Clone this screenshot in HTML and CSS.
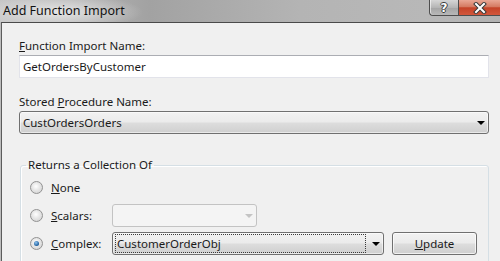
FILE: index.html
```html
<!DOCTYPE html>
<html lang="en">
<head>
<meta charset="UTF-8" />
<title>Add Function Import</title>
<link rel="stylesheet" href="styles.css">
</head>
<body>

<div class="window">
  <div class="titlebar">
    <span class="title">Add Function Import</span>
    <div class="caption-btns">
      <div class="cap-btn help"><span>?</span></div>
      <div class="cap-btn close">
        <svg width="16" height="12" viewBox="0 0 16 12">
          <path d="M4 2 L12 10 M12 2 L4 10" stroke="#3a3a3a" stroke-width="4" stroke-linecap="square" fill="none"/>
          <path d="M4 2 L12 10 M12 2 L4 10" stroke="#ffffff" stroke-width="2" stroke-linecap="square" fill="none"/>
        </svg>
      </div>
    </div>
  </div>

  <div class="client">
    <label class="field-label"><u>F</u>unction Import Name:</label>
    <div class="textbox">GetOrdersByCustomer</div>

    <label class="field-label second">Stored <u>P</u>rocedure Name:</label>
    <div class="combo wide">
      <span class="combo-text">CustOrdersOrders</span>
      <span class="arrow"></span>
    </div>

    <fieldset class="group">
      <legend>Returns a Collection Of</legend>

      <div class="opt">
        <span class="radio"></span>
        <span class="opt-label"><u>N</u>one</span>
      </div>

      <div class="opt">
        <span class="radio"></span>
        <span class="opt-label"><u>S</u>calars:</span>
        <div class="combo disabled scalars">
          <span class="combo-text"></span>
          <span class="arrow"></span>
        </div>
      </div>

      <div class="opt">
        <span class="radio checked"></span>
        <span class="opt-label"><u>C</u>omplex:</span>
        <div class="combo complex">
          <span class="combo-text focus">CustomerOrderObj</span>
          <span class="arrow"></span>
        </div>
        <div class="button"><u>U</u>pdate</div>
      </div>
    </fieldset>
  </div>
</div>

</body>
</html>
```

FILE: styles.css
```css
/* Reset */
*, *::before, *::after {
  box-sizing: border-box;
  margin: 0; padding: 0;
}
html, body {
  height: 100%;
  font-family: 'Noto Sans', 'Open Sans', sans-serif;
  font-size: 11.5px;
  color: #1a1a1a;
  overflow: hidden;
}
body {
  background: #bdbdbd;
}
u {
  text-decoration: underline;
  text-underline-offset: 1px;
}

.window {
  display: flex;
  flex-direction: column;
  height: 261px;
}

/* Title bar */
.titlebar {
  height: 24px;
  display: flex;
  align-items: flex-start;
  justify-content: space-between;
  background:
    radial-gradient(ellipse 85px 18px at 58px 12px, rgba(232,232,232,0.95), rgba(232,232,232,0) 100%),
    linear-gradient(to right, #c4c4c4 0%, #a2a2a2 30%, #b4b4b4 60%, #b8b8b8 85%, #b2b2b2 100%);
}
.title {
  font-size: 12.5px;
  line-height: 22px;
  padding-left: 3px;
  color: #111;
}
.caption-btns {
  display: flex;
}
.cap-btn {
  height: 16px;
  display: flex;
  align-items: center;
  justify-content: center;
  border: 1px solid #4e4e4e;
  border-top: none;
}
.help {
  width: 29px;
  border-right: none;
  border-bottom-left-radius: 4px;
  background: linear-gradient(#d6d6d6, #b5b5b5 50%, #a4a4a4 51%, #b8b8b8);
  box-shadow: inset 1px 0 0 rgba(255,255,255,0.6);
}
.help span {
  font-family: 'DejaVu Sans', sans-serif;
  font-weight: bold;
  font-size: 12px;
  color: #fff;
  text-shadow: -1px 0 #3b3b3b, 1px 0 #3b3b3b, 0 -1px #3b3b3b, 0 1px #3b3b3b;
}
.close {
  width: 42px;
  border-right: none;
  background: linear-gradient(#e9a795, #d57a62 45%, #c44328 52%, #d2573c);
}

/* Client area */
.client {
  flex: 1;
  margin-left: 1px;
  border-left: 1px solid #5c5c5c;
  border-top: 1px solid #4a4a4a;
  background: #f0f0f0;
  padding: 14px 0 0 17px;
}
.field-label {
  display: block;
  height: 17px;
  line-height: 17px;
  margin-bottom: 1px;
}
.field-label.second {
  margin-top: 15px;
}

.textbox {
  width: 470px;
  height: 23px;
  line-height: 21px;
  padding-left: 3px;
  background: #fff;
  border: 1px solid #e2e3ea;
  border-top-color: #abadb3;
}

.combo {
  height: 23px;
  display: flex;
  align-items: center;
  border: 1px solid #707070;
  border-radius: 3px;
  background: linear-gradient(#f2f2f2, #ebebeb 48%, #dddddd 52%, #cfcfcf);
  box-shadow: inset 0 0 0 1px rgba(255,255,255,0.55);
}
.combo.wide {
  width: 470px;
}
.combo-text {
  flex: 1;
  padding-left: 3px;
  line-height: 19px;
}
.arrow {
  width: 0;
  height: 0;
  margin: 0 3px 0 6px;
  border-left: 4px solid transparent;
  border-right: 4px solid transparent;
  border-top: 4px solid #000;
}
.combo.disabled {
  border-color: #c3c3c3;
  background: #f4f4f4;
  box-shadow: none;
}
.combo.disabled .arrow {
  border-top-color: #c4c4c4;
}
.scalars {
  width: 145px;
}
.complex {
  width: 272px;
}
.combo-text.focus {
  margin: 0 0 0 2px;
  padding-left: 1px;
  height: 19px;
  border: 1px dotted #3a3a3a;
  line-height: 17px;
}

/* Group box */
.group {
  width: 469px;
  margin: 23px 0 0 1px;
  padding: 3px 9px 10px 9px;
  border: 1px solid #d5dfe5;
  border-radius: 3px;
  box-shadow: inset 1px 1px 0 #fff;
}
.group legend {
  margin-left: -4px;
  padding: 0 2px;
  line-height: 16px;
}
.opt {
  display: flex;
  align-items: center;
  height: 23px;
  margin-bottom: 5px;
}
.radio {
  width: 13px;
  height: 13px;
  margin-right: 8px;
  border-radius: 50%;
  border: 1px solid #929292;
  background: radial-gradient(circle at 45% 40%, #ffffff 0%, #e6e6e6 45%, #cdcdcd 100%);
  display: flex;
  align-items: center;
  justify-content: center;
}
.radio.checked::after {
  content: "";
  width: 5px;
  height: 5px;
  border-radius: 50%;
  background: radial-gradient(circle at 40% 35%, #8fc4f0, #1c5d9c 70%, #0f3e73);
}
.opt-label {
  width: 61px;
}

.button {
  width: 85px;
  height: 23px;
  margin-left: 8px;
  line-height: 21px;
  text-align: center;
  border: 1px solid #707070;
  border-radius: 3px;
  background: linear-gradient(#f2f2f2, #ebebeb 48%, #dddddd 52%, #cfcfcf);
  box-shadow: inset 0 0 0 1px rgba(255,255,255,0.7);
}
```
